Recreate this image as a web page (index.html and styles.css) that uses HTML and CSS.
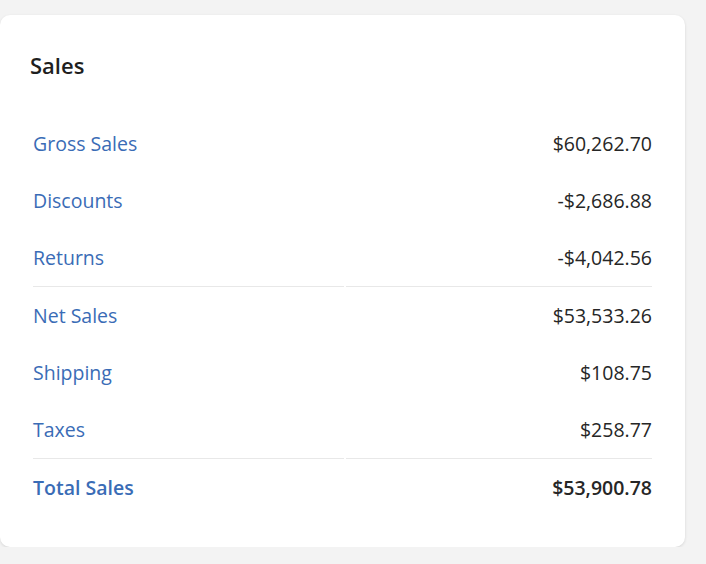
FILE: index.html
```html
<!DOCTYPE html>
<html>
<head>
<meta charset="utf-8">
<link rel="stylesheet" href="styles.css">
</head>
<body>
<div class="card">
  <h2 class="title">Sales</h2>
  <div class="table">
    <div class="row"><div class="label">Gross Sales</div><div class="amount">$60,262.70</div></div>
    <div class="row"><div class="label">Discounts</div><div class="amount">-$2,686.88</div></div>
    <div class="row sep"><div class="label">Returns</div><div class="amount">-$4,042.56</div></div>
    <div class="row"><div class="label">Net Sales</div><div class="amount">$53,533.26</div></div>
    <div class="row"><div class="label">Shipping</div><div class="amount">$108.75</div></div>
    <div class="row sep"><div class="label">Taxes</div><div class="amount">$258.77</div></div>
    <div class="row total"><div class="label">Total Sales</div><div class="amount">$53,900.78</div></div>
  </div>
</div>
</body>
</html>
```
FILE: styles.css
```css
html, body {
  margin: 0;
  padding: 0;
  background: #f3f3f3;
}
body {
  font-family: "Open Sans", "Noto Sans", sans-serif;
  padding-top: 15px;
}
.card {
  width: 685px;
  height: 532px;
  box-sizing: border-box;
  background: #fff;
  border-radius: 10px;
  box-shadow: 0 1px 3px rgba(0,0,0,0.12);
  padding: 0 33px 0 33px;
}
.title {
  margin: 0 0 0 -3px;
  padding-top: 36px;
  font-size: 22px;
  line-height: 28px;
  font-weight: 600;
  color: #1f1f1f;
  height: 64px;
}
.table {
  display: flex;
  flex-direction: column;
}
.row {
  display: grid;
  grid-template-columns: 311px 1fr;
  column-gap: 2px;
  height: 57px;
}
.row > div {
  display: flex;
  align-items: center;
  font-size: 19.5px;
}
.label {
  color: #3a6cb6;
}
.amount {
  justify-content: flex-end;
  color: #262626;
}
.row.sep > div {
  border-bottom: 1.5px solid #e8e8e8;
}
.row.sep {
  height: 58px;
}
.row.total > div {
  font-weight: 600;
}
```
